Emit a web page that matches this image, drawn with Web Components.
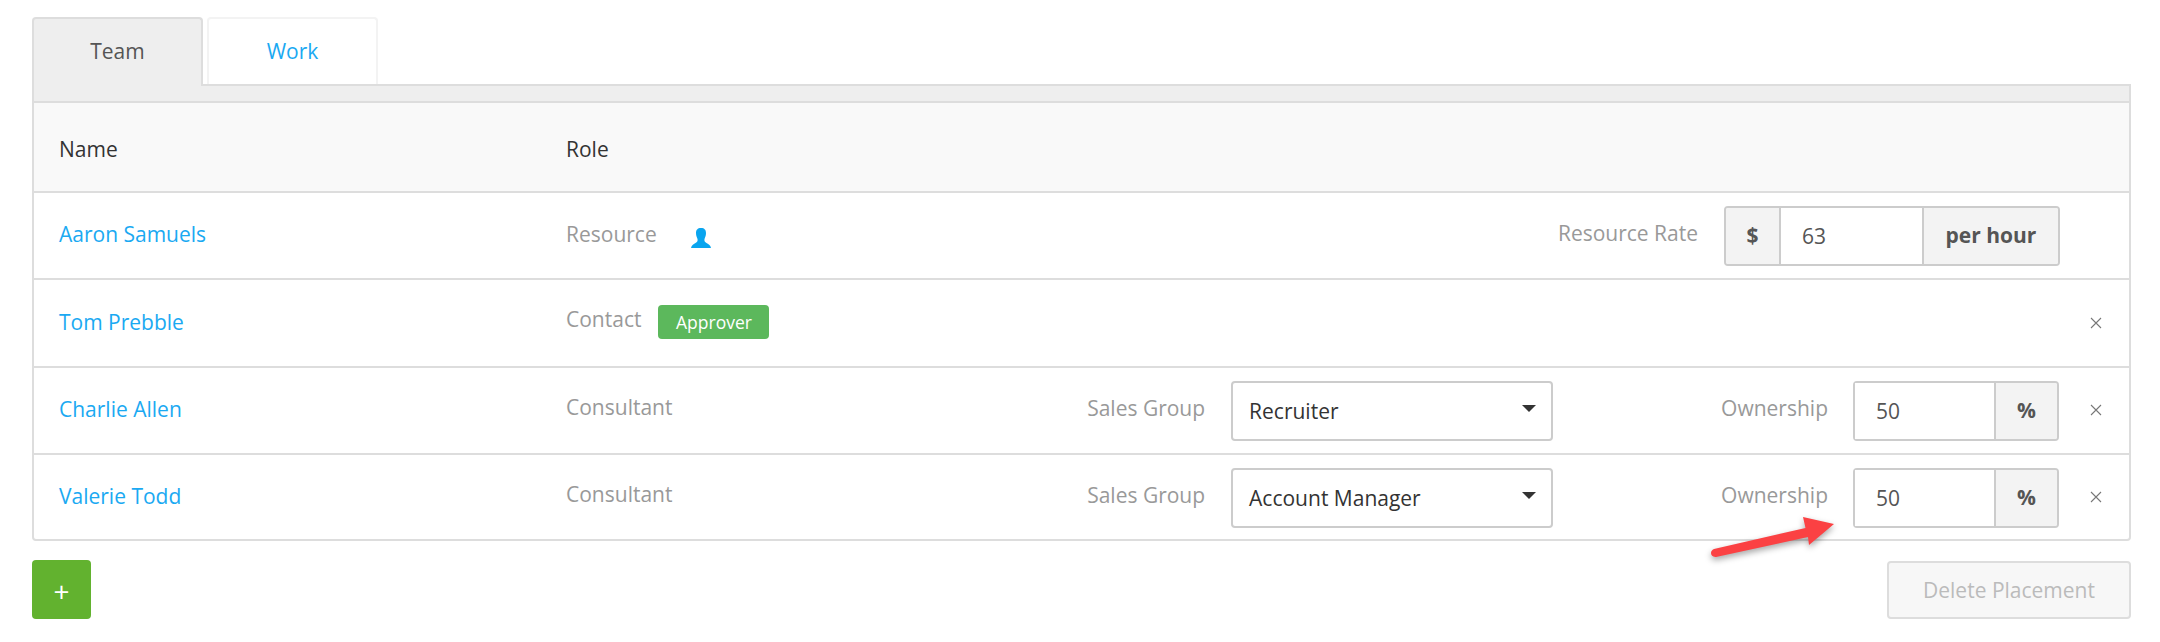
<!DOCTYPE html>
<html>
<head>
<meta charset="utf-8">
<title>Placement team</title>
<style>
  html, body { margin: 0; background: #fff; }
  body { font-family: "Open Sans", "Liberation Sans", sans-serif; font-size: 21px; color: #333; }
</style>
</head>
<body>
<placement-page>
  <tab-bar slot="tabs">
    <tab-item active>Team</tab-item>
    <tab-item>Work</tab-item>
  </tab-bar>

  <team-table>
    <team-row header>
      <span slot="name">Name</span>
      <span slot="role">Role</span>
    </team-row>
    <team-row style="--role-lift: 4px">
      <a-link slot="name">Aaron Samuels</a-link>
      <span slot="role">Resource</span>
      <person-icon slot="extra"></person-icon>
      <field-label slot="controls" label="Resource Rate">
        <input-group style="margin: 0 -1px 1px 0" value="63" prefix="$" suffix="per hour" group-width="336" input-width="141"></input-group>
      </field-label>
    </team-row>
    <team-row removable style="--role-lift: 8px">
      <a-link slot="name">Tom Prebble</a-link>
      <span slot="role">Contact</span>
      <status-badge slot="extra">Approver</status-badge>
    </team-row>
    <team-row removable>
      <a-link slot="name">Charlie Allen</a-link>
      <span slot="role">Consultant</span>
      <field-label slot="controls" label="Sales Group"><select-box>Recruiter</select-box></field-label>
      <field-label slot="controls" label="Ownership" style="gap: 25px">
        <input-group value="50" suffix="%" group-width="206" input-width="139"></input-group>
      </field-label>
    </team-row>
    <team-row removable>
      <a-link slot="name">Valerie Todd</a-link>
      <span slot="role">Consultant</span>
      <field-label slot="controls" label="Sales Group"><select-box>Account Manager</select-box></field-label>
      <field-label slot="controls" label="Ownership" style="gap: 25px">
        <input-group value="50" suffix="%" group-width="206" input-width="139"></input-group>
      </field-label>
    </team-row>
  </team-table>

  <add-button slot="actions">+</add-button>
  <delete-button slot="actions">Delete Placement</delete-button>
  <red-arrow slot="overlay"></red-arrow>
</placement-page>

<script>
// small helper, every element below has the same shadow setup
class ShadowElement extends HTMLElement {
    constructor(html) {
        super();
        this.attachShadow({mode: 'open'});
        this.shadowRoot.innerHTML = html;
    }
}

class PlacementPage extends ShadowElement {
    constructor() {
        super(`
        <style>
            :host { display: block; position: relative; width: 2099px; padding: 17px 29px 0 32px; }
            .band { height: 15px; background: #eee; border: solid #ddd; border-width: 0 2px; }
            .actions { display: flex; justify-content: space-between; align-items: center; margin-top: 19px; }
        </style>
        <slot name="tabs"></slot>
        <div class="band"></div>
        <slot></slot>
        <div class="actions"><slot name="actions"></slot></div>
        <slot name="overlay"></slot>`);
    }
}

class TabBar extends ShadowElement {
    constructor() {
        super(`
        <style>
            :host { display: flex; align-items: flex-start; gap: 4px; height: 67px; border-bottom: 2px solid #ddd; }
        </style>
        <slot></slot>`);
    }
}

class TabItem extends ShadowElement {
    constructor() {
        super(`
        <style>
            :host { display: flex; align-items: center; justify-content: center; box-sizing: border-box; width: 171px; height: 67px; padding-bottom: 1px;
                    border: 2px solid #f3f3f3; border-bottom: 0; border-radius: 4px 4px 0 0; color: #1aa9f2; background: #fff; }
            :host([active]) { height: 69px; padding-bottom: 3px; background: #eee; color: #555; border-color: #ddd; }
        </style>
        <slot></slot>`);
    }
}

class TeamTable extends ShadowElement {
    constructor() {
        super(`
        <style>
            :host { display: block; border: 2px solid #ddd; border-radius: 0 0 4px 4px; }
        </style>
        <slot></slot>`);
    }
}

class TeamRow extends ShadowElement {
    constructor() {
        super(`
        <style>
            :host { display: grid; grid-template-columns: 507px auto 1fr 70px; align-items: center; box-sizing: border-box;
                    height: 87.4px; border-bottom: 2px solid #ddd; padding-left: 25px; color: #999; }
            :host([header]) { height: 90px; padding-top: 3px; background: #f9f9f9; color: #333; }
            :host(:last-child) { height: 84px; border-bottom: 0; }
            .name { padding-bottom: 3px; }
            .role { padding-bottom: var(--role-lift, 6px); }
            :host([header]) .name, :host([header]) .role { padding-bottom: 0; }
            .mid { display: flex; align-items: center; justify-content: space-between; gap: 17px; }
            .controls { display: flex; justify-content: flex-end; gap: 168px; padding-top: 2px; }
            .close { display: flex; justify-content: center; padding-left: 4px; visibility: hidden; }
            :host([removable]) .close { visibility: visible; }
        </style>
        <div class="name"><slot name="name"></slot></div>
        <div class="mid"><span class="role"><slot name="role"></slot></span><slot name="extra"></slot></div>
        <div class="controls"><slot name="controls"></slot></div>
        <div class="close">
            <svg width="14" height="14" viewBox="0 0 14 14"><path d="M2 2 L12 12 M12 2 L2 12" stroke="#777" stroke-width="1.1" fill="none"/></svg>
        </div>`);
    }
}

class ALink extends ShadowElement {
    constructor() {
        super(`<style>:host { display: inline; color: #1aa9f2; cursor: pointer; }</style><slot></slot>`);
    }
}

class PersonIcon extends ShadowElement {
    constructor() {
        super(`
        <style>:host { display: block; height: 20px; margin-left: 17px; }</style>
        <svg width="20" height="20" viewBox="0 0 20 20"><path fill="#0aa5ef" d="M10 0 C6.5 0 5 2 5 5 C5 8 6 9.5 6.5 11 C7 13 6 14 4.5 15 C3 16 .5 17 0 20 L20 20 C19.5 17 17 16 15.5 15 C14 14 13 13 13.5 11 C14 9.5 15 8 15 5 C15 2 13.5 0 10 0 Z"/></svg>`);
    }
}

class StatusBadge extends ShadowElement {
    constructor() {
        super(`
        <style>
            :host { display: flex; align-items: center; justify-content: center; width: 111px; height: 34px; box-sizing: border-box; padding-bottom: 1px; margin-bottom: 2px;
                    background: #5cb85c; color: #fff; font-size: 17.5px; border-radius: 4px; }
        </style>
        <slot></slot>`);
    }
}

class FieldLabel extends ShadowElement {
    constructor() {
        super(`
        <style>
            :host { display: flex; align-items: center; gap: 26px; color: #999; }
            .text { padding-bottom: 7px; }
        </style>
        <span class="text"></span>
        <slot></slot>`);
    }
    connectedCallback() {
        this.shadowRoot.querySelector('.text').textContent = this.getAttribute('label');
    }
}

class InputGroup extends ShadowElement {
    constructor() {
        super(`
        <style>
            :host { display: flex; box-sizing: border-box; height: 60px; border: 2px solid #ccc; border-radius: 4px; color: #555; }
            .addon { display: flex; align-items: center; justify-content: center; box-sizing: border-box; background: #f3f3f3; font-weight: 700; padding-bottom: 2px; }
            .addon:empty { display: none; }
            .prefix { flex: none; width: 55px; border-right: 2px solid #ccc; border-radius: 2px 0 0 2px; }
            .suffix { flex: 1; border-left: 2px solid #ccc; border-radius: 0 2px 2px 0; }
            .value { display: flex; align-items: center; flex: none; box-sizing: border-box; padding-left: 21px; background: #fff; }
        </style>
        <span class="addon prefix"></span><span class="value"></span><span class="addon suffix"></span>`);
    }
    connectedCallback() {
        const root = this.shadowRoot;
        root.querySelector('.prefix').textContent = this.getAttribute('prefix') || '';
        root.querySelector('.suffix').textContent = this.getAttribute('suffix') || '';
        root.querySelector('.value').textContent = this.getAttribute('value');
        root.querySelector('.value').style.width = this.getAttribute('input-width') + 'px';
        this.style.width = this.getAttribute('group-width') + 'px';
    }
}

class SelectBox extends ShadowElement {
    constructor() {
        super(`
        <style>
            :host { display: flex; align-items: center; justify-content: space-between; box-sizing: border-box; width: 322px; height: 60px;
                    padding: 0 15px 0 16px; border: 2px solid #ccc; border-radius: 4px; color: #333; background: #fff; }
            .caret { width: 0; height: 0; border: 7px solid transparent; border-top-color: #333; border-bottom: 0; margin-bottom: 6px; }
        </style>
        <span><slot></slot></span><span class="caret"></span>`);
    }
}

class AddButton extends ShadowElement {
    constructor() {
        super(`
        <style>
            :host { display: flex; align-items: center; justify-content: center; box-sizing: border-box; width: 59px; height: 59px; padding-top: 3px;
                    background: #62b22f; color: #fff; border-radius: 4px; font-size: 28px; }
        </style>
        <slot></slot>`);
    }
}

class DeleteButton extends ShadowElement {
    constructor() {
        super(`
        <style>
            :host { display: flex; align-items: center; justify-content: center; box-sizing: border-box; width: 244px; height: 58px; background: #f7f7f7; color: #bbb; border: 2px solid #ddd; border-radius: 4px; }
        </style>
        <slot></slot>`);
    }
}

// annotation drawn over the table, so this one is absolute
class RedArrow extends ShadowElement {
    constructor() {
        super(`
        <style>
            :host { display: block; position: absolute; left: 1700px; top: 500px; width: 150px; height: 70px; }
            svg { overflow: visible; filter: drop-shadow(0 3px 3px rgba(0,0,0,.35)); }
        </style>
        <svg width="150" height="70" viewBox="0 0 150 70">
            <path fill="#fb4143" d="M134 24 L103 17 L105.5 28 L14 49 C9.5 50.5 10 57.5 16 57 L108 37 L109 45 Z"/>
        </svg>`);
    }
}

const elements = {
    'placement-page': PlacementPage, 'tab-bar': TabBar, 'tab-item': TabItem, 'team-table': TeamTable,
    'team-row': TeamRow, 'a-link': ALink, 'person-icon': PersonIcon, 'status-badge': StatusBadge,
    'field-label': FieldLabel, 'input-group': InputGroup, 'select-box': SelectBox,
    'add-button': AddButton, 'delete-button': DeleteButton, 'red-arrow': RedArrow
};
Object.keys(elements).forEach(name => customElements.define(name, elements[name]));
</script>
</body>
</html>
